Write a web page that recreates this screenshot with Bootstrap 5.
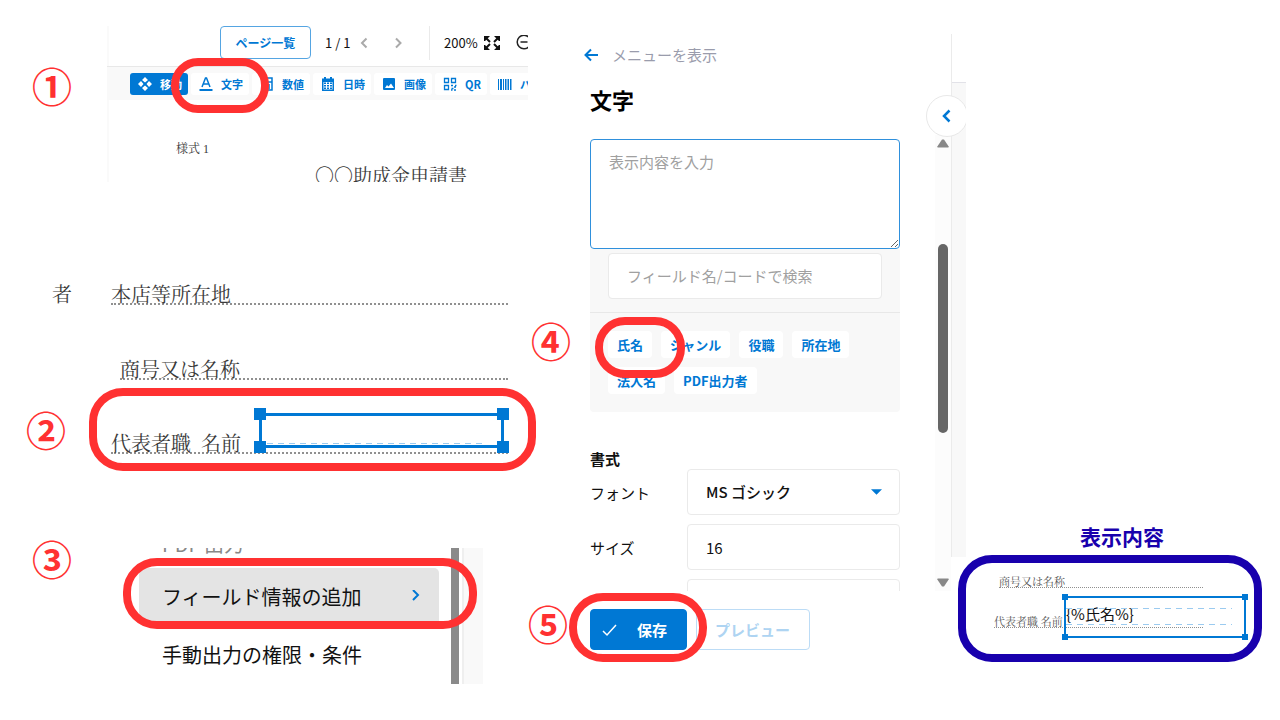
<!DOCTYPE html>
<html lang="ja">
<head>
<meta charset="utf-8">
<meta name="viewport" content="width=device-width, initial-scale=1">
<title>文字フィールドの設定手順</title>
<link href="https://cdn.jsdelivr.net/npm/bootstrap@5.3.0/dist/css/bootstrap.min.css" rel="stylesheet">
<style>
:root { --main: #0078d4; --mark-red: #ff3131; --mark-navy: #1800ad; --edge: #e8e8e8; --tint: #f8f8f8; }
body { font-family: "Noto Sans CJK JP", sans-serif; font-size: 15px; line-height: 24px; color: #111; background: #fff; }
.board { display: grid; grid-template-columns: minmax(0, 530fr) minmax(0, 436fr) minmax(0, 314fr); }
.serif { font-family: "Liberation Serif", "Noto Serif CJK JP", "Noto Sans CJK JP", serif; font-weight: 400; color: #3a3a3a; }
.step { flex: none; width: 38px; height: 38px; font-family: "Noto Sans CJK JP", sans-serif; font-size: 40px; line-height: 34px; font-weight: 700; color: var(--mark-red); display: flex; justify-content: center; }
.ring { position: absolute; border: 8px solid var(--mark-red); border-radius: 34px; pointer-events: none; z-index: 5; }
.ring-navy { border-color: var(--mark-navy); }
svg { display: block; flex: none; }

/* step 1: toolbar */
.viewer { margin: 26px 2px 0 36px; height: 156px; }
.viewer-inner { height: 156px; border-left: 2px solid #fafafa; }
.pages { height: 40px; margin-left: 111px; font-size: 13px; }
.btn-pages { width: 91px; height: 33px; font-size: 12px; font-weight: 700; color: var(--main); border: 1px solid #55a5e2; border-radius: 4px; padding: 0; }
.page-no { margin-left: 14px; width: 34px; }
.vline { width: 1px; height: 34px; background: #eaeaea; margin: 0 14px 0 24px; }
.tools { height: 34px; gap: 3px; margin-left: -2px; padding-left: 24px; background: #f9f9f9; border-top: 1px solid var(--edge); position: relative; }
.tools::before { content: ""; width: 1px; height: 22px; background: #e6e6e6; margin-right: 10px; margin-left: -14px; }
.tool { flex: none; height: 22px; display: flex; align-items: center; gap: 8px; padding: 0 6px 0 8px; font-size: 11px; line-height: 16px; font-weight: 700; color: var(--main); background: #fff; border: 0; border-radius: 3px; white-space: nowrap; }
.tool.active { color: #fff; background: var(--main); }
.ring-1 { left: 64px; top: -9px; width: 98px; height: 55px; border-radius: 27px; }
.form-no { margin: 39px 0 0 67px; font-size: 12px; line-height: 20px; }
.form-title { margin: 7px 0 0 206px; font-size: 19px; line-height: 22px; white-space: nowrap; }

/* step 2: form lines */
.form-lines { margin-top: 99px; padding-right: 22px; font-size: 20px; }
.rule-line { position: relative; height: 24px; line-height: 28px; border-bottom: 2px dotted #909090; white-space: nowrap; }
.picked { position: absolute; border: 3px solid var(--main); }
.picked i { position: absolute; width: 12px; height: 12px; background: var(--main); }
.picked i:nth-of-type(1) { left: -8px; top: -8px; } .picked i:nth-of-type(2) { right: -8px; top: -8px; }
.picked i:nth-of-type(3) { left: -8px; bottom: -8px; } .picked i:nth-of-type(4) { right: -8px; bottom: -8px; }
.guide { position: absolute; height: 1px; background: repeating-linear-gradient(90deg, #9bcbf0 0 6px, transparent 6px 11px); }
.box-a { left: 148px; right: 4px; top: -17px; height: 35px; }
.box-a .guide { left: 5px; right: 16px; bottom: 1px; }
.ring-2 { left: -22px; right: -28px; top: -42px; bottom: -19px; }

/* step 3: settings menu */
.menu-shot { margin: 7px 47px 0 68px; height: 136px; font-size: 20px; }
.menu-row { height: 58px; padding-left: 23px; color: #111; text-decoration: none; position: relative; }
.menu-row.cut { height: 20px; padding-bottom: 12px; line-height: 24px; color: #888; overflow: hidden; }
.menu-row.on { background: #e4e4e4; border-radius: 5px; }
.ring-3 { left: -16px; right: -38px; top: -10px; bottom: -3px; }
.bar { width: 8px; background: #8a8a8a; margin: 0 3px 0 12px; }
.side { width: 21px; background: #f9f9f9; border-left: 2px solid #efefef; }

/* field editor */
.steps-col { width: 60px; }
.editor { width: 310px; padding-top: 43px; }
.back { gap: 14px; margin-left: -6px; color: #9a9cac; text-decoration: none; }
h1 { font-size: 22px; line-height: 28px; font-weight: 700; color: #000; margin: 18px 0 26px; }
.form-control, .form-select { font-size: 15px; line-height: 24px; padding: 10px 18px; border-color: #eaeaea; border-radius: 4px; height: 46px; color: #111; }
.form-control::placeholder { color: #a0a0a0; }
textarea.form-control { height: 110px; border-color: #2f90dc; }
.fields { background: var(--tint); border-radius: 0 0 4px 4px; height: 163px; padding-top: 4px; }
.fields .search { padding: 0 18px 13px; border-bottom: 1px solid var(--edge); }
.fields .form-control { padding: 9px 18px 11px; }
.chips { gap: 9px; padding: 18px; }
.chip { height: 27px; padding: 0 9px; font-size: 13px; line-height: 27px; font-weight: 700; color: var(--main); background: #fff; border: 0; border-radius: 4px; position: relative; white-space: nowrap; }
.ring-4 { left: -13px; top: -14px; width: 90px; height: 61px; border-radius: 30px; }
h2 { font-size: 15px; line-height: 20px; font-weight: 700; margin: 37px 0 0; }
.props { display: grid; grid-template-columns: 97px 1fr; row-gap: 9px; align-items: center; height: 122px; overflow: hidden; }
.props label { padding-top: 2px; }
.form-select { font-weight: 500; background-image: url("data:image/svg+xml,%3Csvg xmlns='http://www.w3.org/2000/svg' viewBox='0 0 12 6'%3E%3Cpath fill='%230078d4' d='M0 0h12L6 6z'/%3E%3C/svg%3E"); background-size: 11px 6px; background-position: right 17px center; }
.actions { gap: 9px; margin-top: 18px; }
.actions .btn { height: 41px; font-size: 15px; line-height: 24px; font-weight: 700; border-radius: 4px; padding: 0 19px 0 18px; }
.btn-save { position: relative; background: var(--main); color: #fff; gap: 20px; }
.actions .btn-save { padding: 0 19px 0 11px; border-color: var(--main); }
.actions .btn-preview:disabled { color: #aed4f2; border-color: #bcdcf6; opacity: 1; }
.ring-5 { left: -22px; right: -21px; top: -17px; bottom: -13px; }
.track { width: 16px; height: 456px; margin-top: 135px; padding: 4px 0 4px; background: #fcfcfc; color: #888; }
.thumb { width: 10px; height: 189px; margin-bottom: 49px; border-radius: 5px; background: #666; }
.canvas-edge { width: 15px; height: 523px; margin-top: 34px; border-left: 1px solid #ebebeb; background: linear-gradient(#fff 48px, #e2e2e8 48px 49px, var(--tint) 49px); position: relative; }
.fold-clip { position: absolute; right: 0; top: 61px; width: 40px; height: 44px; overflow: hidden; }
.fold { width: 42px; height: 42px; background: #fff; border: 1px solid #e8e8e8; border-radius: 50%; padding: 0; display: flex; align-items: center; justify-content: center; }

/* result */
.result h2 { margin: 523px 0 0 114px; font-size: 21px; line-height: 26px; color: var(--mark-navy); }
.outcome { position: relative; margin: 6px 18px 0 -8px; padding: 19px 59px 0 36px; height: 107px; font-size: 11px; }
.outcome .rule-line { height: 14px; line-height: 17px; border-bottom-width: 1px; color: #555; }
.ring-n { inset: 0; }
.box-b { left: 70px; right: -43px; top: -18px; height: 42px; border-width: 2px; font-family: "Noto Sans CJK JP", sans-serif; font-size: 15px; font-weight: 400; line-height: 32px; color: #111; }
.box-b i { width: 6px; height: 6px; }
.box-b i:nth-of-type(1), .box-b i:nth-of-type(3) { left: -4px; } .box-b i:nth-of-type(2), .box-b i:nth-of-type(4) { right: -4px; }
.box-b i:nth-of-type(1), .box-b i:nth-of-type(2) { top: -4px; } .box-b i:nth-of-type(3), .box-b i:nth-of-type(4) { bottom: -4px; }
.box-b .guide { left: 0; right: 12px; }
.g-top { top: 10px; } .g-low { top: 26px; }
</style>
</head>
<body>
<main class="board">

  <div>
    <section class="d-flex align-items-start">
      <span class="step" style="margin:68px 0 0 33px">①</span>
      <div class="viewer flex-grow-1 overflow-hidden">
        <div class="viewer-inner">
          <div class="pages d-flex align-items-start">
            <button class="btn btn-pages flex-shrink-0">ページ一覧</button>
            <div class="d-flex align-items-center" style="height:34px">
              <span class="page-no">1 / 1</span>
              <svg width="12" height="12" viewBox="0 0 12 12" fill="none" stroke="#aaa" stroke-width="2"><path d="M7.500 1.500 3 6l4.500 4.500"/></svg>
              <svg style="margin-left:22px" width="12" height="12" viewBox="0 0 12 12" fill="none" stroke="#aaa" stroke-width="2"><path d="M3 1.500 7.500 6 3 10.500"/></svg>
              <span class="vline"></span>
              <span style="width:40px">200%</span>
              <svg width="16" height="16" viewBox="0 0 16 16" fill="#111" stroke="#111" stroke-width="2"><path stroke="none" d="M0 1h6L1 6H0zM16 1v5h-1l-5-5zM0 15v-5h1l5 5zM16 15h-6l5-5h1z"/><path d="m2 3 4 4M14 3l-4 4M2 13l4-4M14 13l-4-4"/></svg>
              <svg style="margin-left:16px" width="16" height="16" viewBox="0 0 16 16" fill="none" stroke="#222" stroke-width="1.500"><circle cx="8" cy="7" r="6.800"/><path d="M4.500 7h7"/></svg>
            </div>
          </div>
          <div class="tools d-flex align-items-center">
            <button class="tool active"><svg width="14" height="14" viewBox="0 0 14 14" fill="currentColor"><path d="m7 0 3 3-3 2.500L4 3zM7 14l3-3-3-2.500L4 11zM0 7l3-3 2.500 3L3 10zM14 7l-3-3-2.500 3 2.500 3z"/></svg>移動</button>
            <button class="tool"><svg width="14" height="14" viewBox="0 0 14 14" fill="none" stroke="currentColor" stroke-width="1.500"><path d="M3 10 6.500 1h1L11 10M4.300 7h5.400"/><path stroke-width="2" d="M.500 13h13"/></svg>文字</button>
            <button class="tool"><svg width="14" height="14" viewBox="0 0 14 14" fill="none" stroke="currentColor" stroke-width="1.500"><path d="M2 1h10v12H2zM2 5h10M5 7v5M9 7v5"/></svg>数値</button>
            <button class="tool"><svg width="14" height="14" viewBox="0 0 14 14" fill="currentColor"><path fill-rule="evenodd" d="M1 1.500h2V0h2v1.500h4V0h2v1.500h2V14H1zM2.500 5v7.500h9V5zM3 5.500h2V7H3zM6 5.500h2V7H6zM9 5.500h2V7H9zM3 8h2v1.500H3zM6 8h2v1.500H6zM9 8h2v1.500H9zM3 10.500h2V12H3zM6 10.500h2V12H6zM9 10.500h2V12H9z"/></svg>日時</button>
            <button class="tool"><svg width="14" height="14" viewBox="0 0 14 14" fill="currentColor"><path fill-rule="evenodd" d="M2 1h10q1 0 1 1v10q0 1-1 1H2q-1 0-1-1V2q0-1 1-1zM3 11h9L9 6.500 6.500 9.500 5 8z"/></svg>画像</button>
            <button class="tool"><svg width="14" height="14" viewBox="0 0 14 14" fill="none" stroke="currentColor" stroke-width="1.300"><path d="M1.500 1.500h4v4h-4zM8.500 1.500h4v4h-4zM1.500 8.500h4v4h-4z"/><path d="M8 8.500h2M11 10h2M8.500 11.500h2M11 13h2M12 8.500h1.500M8 13h1.500"/></svg>QR</button>
            <button class="tool"><svg width="14" height="14" viewBox="0 0 14 14" fill="currentColor"><path d="M0 2h1v11H0zM2 2h2v11H2zM5 2h1v11H5zM7 2h1.500v11H7zM9.500 2H11v11H9.500zM12 2h1.500v11H12z"/></svg>バ</button>
            <span class="ring ring-1"></span>
          </div>
          <div class="form-no serif">様式 1</div>
          <div class="form-title serif">〇〇助成金申請書</div>
        </div>
      </div>
    </section>

    <section class="form-lines serif">
      <div class="d-flex">
        <span style="margin:0 39px 0 52px; line-height:28px; height:24px">者</span>
        <div class="rule-line flex-grow-1">本店等所在地</div>
      </div>
      <div class="rule-line" style="margin:51px 0 32px 120px">商号又は名称</div>
      <div class="d-flex align-items-end">
        <span class="step" style="margin:0 46px 4px 27px">②</span>
        <div class="rule-line flex-grow-1">代表者職&nbsp; 名前
          <div class="picked box-a"><div class="guide"></div><i></i><i></i><i></i><i></i></div>
          <div class="ring ring-2"></div>
        </div>
      </div>
    </section>

    <section class="d-flex align-items-start" style="margin-top:87px">
      <span class="step" style="margin-left:33px">③</span>
      <div class="menu-shot d-flex flex-grow-1">
        <nav class="flex-grow-1">
          <div class="menu-row cut d-flex align-items-end">PDF 出力</div>
          <a href="#" class="menu-row on d-flex align-items-center justify-content-between">フィールド情報の追加
            <svg style="margin-right:17px" width="14" height="14" viewBox="0 0 14 14" fill="none" stroke="#0078d4" stroke-width="2"><path d="m5 0 5 5-5 5"/></svg>
            <span class="ring ring-3"></span></a>
          <a href="#" class="menu-row d-flex align-items-center">手動出力の権限・条件</a>
        </nav>
        <div class="bar"></div>
        <div class="side"></div>
      </div>
    </section>
  </div>

  <section class="d-flex">
    <div class="steps-col flex-shrink-0">
      <span class="step" style="margin:323px 0 0 2px">④</span>
      <span class="step" style="margin:245px 0 0 -1px">⑤</span>
    </div>
    <form class="editor flex-grow-1">
      <a href="#" class="back d-flex align-items-center">
        <svg width="14" height="14" viewBox="0 0 14 14" fill="none" stroke="#0078d4" stroke-width="2"><path d="M14 7H2M7 1.500 1.500 7 7 12.500"/></svg>メニューを表示</a>
      <h1>文字</h1>
      <textarea class="form-control d-block" placeholder="表示内容を入力" aria-label="表示内容"></textarea>
      <div class="fields">
        <div class="search"><input class="form-control" type="search" placeholder="フィールド名/コードで検索" aria-label="フィールド検索"></div>
        <div class="chips d-flex flex-wrap">
          <button type="button" class="chip">氏名<span class="ring ring-4"></span></button>
          <button type="button" class="chip">ジャンル</button>
          <button type="button" class="chip">役職</button>
          <button type="button" class="chip">所在地</button>
          <button type="button" class="chip">法人名</button>
          <button type="button" class="chip">PDF出力者</button>
        </div>
      </div>
      <h2>書式</h2>
      <div class="props align-content-start">
        <label for="font">フォント</label>
        <select id="font" class="form-select"><option>MS ゴシック</option></select>
        <label for="size">サイズ</label>
        <input id="size" class="form-control" value="16">
        <span></span>
        <input class="form-control" aria-label="行間">
      </div>
      <div class="actions d-flex">
        <button type="button" class="btn btn-save d-flex align-items-center">
          <svg width="15" height="14" viewBox="0 0 15 14" fill="none" stroke="#fff" stroke-width="1.500"><path d="m1 8 4 4 9-10"/></svg>保存<span class="ring ring-5"></span></button>
        <button type="button" class="btn btn-preview" disabled>プレビュー</button>
      </div>
    </form>
    <div class="flex-shrink-0 d-flex" style="margin-left:35px">
      <div class="track d-flex flex-column align-items-center justify-content-between">
        <svg width="12" height="9" viewBox="0 0 12 9" fill="currentColor"><path d="M5 .500h2L12 8l-1 .500H1L0 8z"/></svg>
        <div class="thumb"></div>
        <svg width="12" height="9" viewBox="0 0 12 9" fill="currentColor"><path d="M5 8.500h2L12 1l-1-.500H1L0 1z"/></svg>
      </div>
      <div class="canvas-edge">
        <div class="fold-clip"><button type="button" class="fold" aria-label="閉じる"><svg width="14" height="14" viewBox="0 0 14 14" fill="none" stroke="#0078d4" stroke-width="2.500"><path d="M9.500 1.500 4 7l5.500 5.500"/></svg></button></div>
      </div>
    </div>
  </section>

  <section class="result">
    <h2>表示内容</h2>
    <div class="outcome serif">
      <div class="rule-line" style="margin-left:5px">商号又は名称</div>
      <div class="rule-line" style="margin-top:26px">代表者職 名前
        <div class="picked box-b">{%氏名%}<div class="guide g-top"></div><div class="guide g-low"></div><i></i><i></i><i></i><i></i></div>
      </div>
      <div class="ring ring-navy ring-n"></div>
    </div>
  </section>
</main>
<script src="https://cdn.jsdelivr.net/npm/bootstrap@5.3.0/dist/js/bootstrap.bundle.min.js"></script>
</body>
</html>
